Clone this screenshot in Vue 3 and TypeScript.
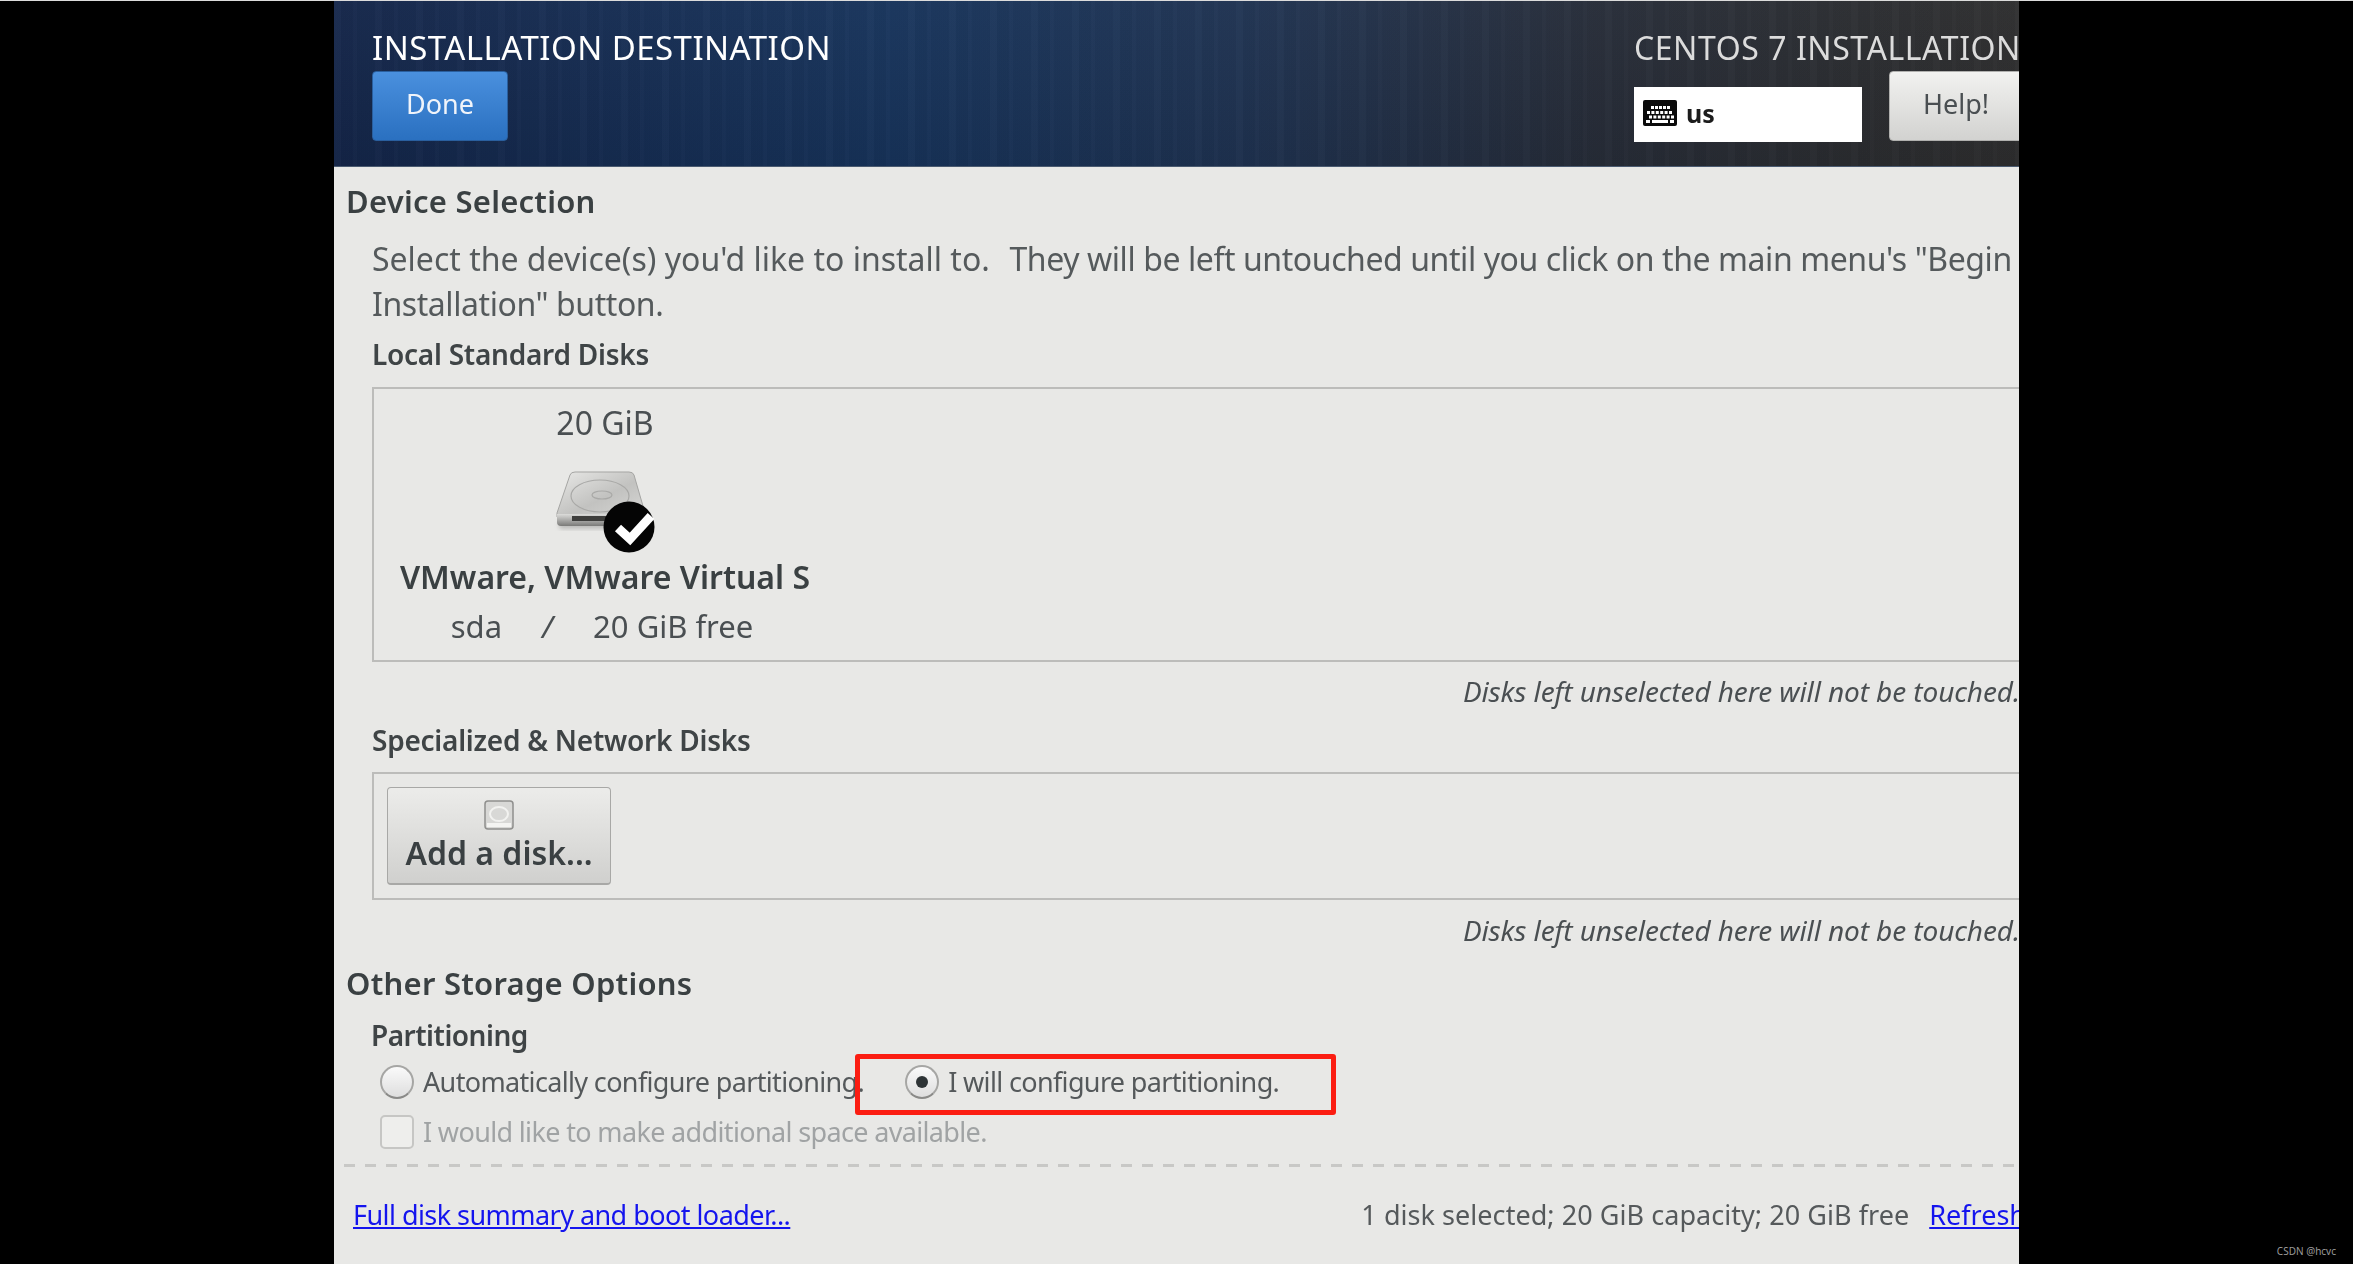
<script setup lang="ts">
const streaks: string = [
  'repeating-linear-gradient(90deg, rgba(255,255,255,.014) 0 7px, rgba(0,0,0,.018) 7px 19px, rgba(255,255,255,.01) 19px 23px, rgba(0,0,0,.012) 23px 41px)',
  'linear-gradient(180deg, rgba(255,255,255,.025), rgba(0,0,0,.07))',
  'linear-gradient(90deg, #14264a 0%, #17345c 33%, #1f3352 54%, #272d39 75%, #2b2d31 90%, #2e2e2f 100%)',
].join(',')
const keyRows: { x: number; y: number; w: number }[] = [
  ...[0, 1, 2, 3, 4].map((i) => ({ x: 8 + i * 4, y: 6, w: 3 })),
  ...[0, 1, 2, 3, 4, 5].map((i) => ({ x: 4 + i * 4.4, y: 11, w: 3 })),
  ...[0, 1, 2, 3, 4, 5].map((i) => ({ x: 6 + i * 4.4, y: 15.5, w: 3 })),
  { x: 3, y: 20, w: 4 },
  { x: 9, y: 20, w: 16 },
  { x: 27, y: 20, w: 4 },
]
</script>

<template>
  <div class="page">
    <div class="window">
      <header class="head" :style="{ backgroundImage: streaks }">
        <div class="head-left">
          <h1 class="title">INSTALLATION DESTINATION</h1>
          <button class="btn btn-done">Done</button>
        </div>
        <div class="head-right">
          <div class="product">CENTOS 7 INSTALLATION</div>
          <div class="head-controls">
            <div class="layout">
              <svg class="kbd" width="34" height="26" viewBox="0 0 34 26">
                <rect x="0" y="0" width="34" height="26" rx="2" fill="#0b0b0b" />
                <rect v-for="(k, i) in keyRows" :key="i" :x="k.x" :y="k.y" :width="k.w" height="3" fill="#fff" />
              </svg>
              <span>us</span>
            </div>
            <button class="btn btn-help">Help!</button>
          </div>
        </div>
      </header>

      <main class="body">
        <h2 class="section first">Device Selection</h2>
        <p class="intro">Select the device(s) you'd like to install to.&nbsp; <span class="tight">They will be left untouched until you click on the main menu's "Begin<br />Installation" button.</span></p>

        <h3 class="sub">Local Standard Disks</h3>
        <div class="box box-local">
          <div class="disk">
            <div class="disk-size">20 GiB</div>
            <svg class="disk-icon" width="100" height="82" viewBox="0 0 100 82">
              <defs>
                <linearGradient id="dtop" x1="0" y1="0" x2="1" y2="1">
                  <stop offset="0" stop-color="#e8e8e6" />
                  <stop offset=".55" stop-color="#c2c2c0" />
                  <stop offset="1" stop-color="#d8d8d6" />
                </linearGradient>
                <linearGradient id="dfront" x1="0" y1="0" x2="0" y2="1">
                  <stop offset="0" stop-color="#dcdcda" />
                  <stop offset="1" stop-color="#7a7a78" />
                </linearGradient>
                <filter id="dshadow" x="-20%" y="-20%" width="140%" height="140%">
                  <feGaussianBlur stdDeviation="2" />
                </filter>
              </defs>
              <rect x="3" y="50" width="84" height="8" rx="3" fill="#9a9a98" opacity=".55" filter="url(#dshadow)" />
              <path d="M19 1 H73 Q77 1 78 4 L89 42 V46 H1 V42 L14 4 Q15 1 19 1Z" fill="url(#dtop)" stroke="#a5a5a3" stroke-width="1" />
              <ellipse cx="44" cy="25" rx="29" ry="16" fill="none" stroke="#a9a9a7" stroke-width="1.2" />
              <ellipse cx="46" cy="24" rx="10" ry="4" fill="none" stroke="#a9a9a7" stroke-width="1.2" />
              <path d="M1 43 H89 V51 Q89 55 85 55 H5 Q1 55 1 51Z" fill="url(#dfront)" />
              <rect x="16" y="45" width="34" height="5" fill="#3e3e3c" />
              <circle cx="73" cy="56" r="25.5" fill="#050505" />
              <path d="M62 57 L74 68 L95 45" fill="none" stroke="#fff" stroke-width="9" />
            </svg>
            <div class="disk-name">VMware, VMware Virtual S</div>
            <div class="disk-meta">
              <span>sda</span><span class="slash">/</span><span>20 GiB free</span>
            </div>
          </div>
        </div>
        <p class="note">Disks left unselected here will not be touched.</p>

        <h3 class="sub sub-net">Specialized &amp; Network Disks</h3>
        <div class="box box-net">
          <button class="add">
            <svg class="add-icon" width="30" height="30" viewBox="0 0 30 30">
              <rect x="1" y="1" width="28" height="28" rx="3" fill="#d8d8d6" stroke="#8f8f8d" stroke-width="1.5" />
              <ellipse cx="15" cy="14" rx="9" ry="7" fill="none" stroke="#f2f2f0" stroke-width="2" />
              <rect x="3" y="23" width="24" height="4" fill="#f4f4f2" />
            </svg>
            <span>Add a disk...</span>
          </button>
        </div>
        <p class="note note-net">Disks left unselected here will not be touched.</p>

        <h2 class="section other">Other Storage Options</h2>
        <h3 class="sub sub-part">Partitioning</h3>
        <div class="radios">
          <label class="opt opt-auto"><span class="radio"></span>Automatically configure partitioning.</label>
          <label class="opt opt-manual"><span class="radio radio-on"></span>I will configure partitioning.</label>
          <div class="highlight"></div>
        </div>
        <label class="opt opt-check"><span class="check"></span>I would like to make additional space available.</label>
        <div class="dash"></div>
        <footer class="foot">
          <a class="link link-full">Full disk summary and boot loader...</a>
          <span class="summary">1 disk selected; 20 GiB capacity; 20 GiB free</span>
          <a class="link refresh">Refresh</a>
        </footer>
      </main>
    </div>
    <div class="topline"></div>
    <div class="mark">CSDN @hcvc</div>
  </div>
</template>

<style>
html, body { margin: 0; background: #000; }
</style>

<style scoped>
.page {
  position: relative;
  width: 2353px;
  height: 1264px;
  background: #000;
  overflow: hidden;
  font-family: "Noto Sans", "Open Sans", sans-serif;
}
.topline {
  position: absolute;
  left: 0;
  top: 0;
  width: 100%;
  height: 1px;
  background: #dcdcdc;
}
.window {
  width: 1685px;
  height: 1264px;
  margin-left: 334px;
  background: #e8e8e6;
  overflow: hidden;
  color: #2e3436;
  filter: blur(0.5px);
}
.head {
  height: 167px;
  box-sizing: border-box;
  display: flex;
  justify-content: space-between;
  padding: 28px 0 0 38px;
  border-bottom: 1px solid #4a5a70;
  white-space: nowrap;
}
.title, .product {
  margin: 0;
  line-height: 40px;
  font-weight: 400;
  height: 43px;
}
.title { color: #fff; font-size: 33px; letter-spacing: 0.45px; }
.product { color: #dcdcdc; font-size: 32px; letter-spacing: 0.55px; }
.btn {
  display: block;
  box-sizing: border-box;
  height: 70px;
  font-family: inherit;
  font-size: 27px;
  border-radius: 4px;
  padding: 0 0 6px;
}
.btn-done {
  width: 136px;
  color: #f0f4fa;
  background: linear-gradient(#4a90de, #2a70c0);
  border: 1px solid #2a5f9e;
}
.head-right { width: 385px; flex: none; }
.head-controls { display: flex; align-items: flex-end; gap: 27px; }
.layout {
  flex: none;
  width: 228px;
  height: 55px;
  box-sizing: border-box;
  background: #fff;
  color: #1c1c1c;
  display: flex;
  align-items: center;
  gap: 9px;
  padding: 0 0 3px 9px;
  font-size: 25px;
  font-weight: 700;
  margin-bottom: -1px;
}
.kbd { flex: none; }
.btn-help {
  width: 160px;
  flex: none;
  padding-right: 26px;
  color: #4a4f52;
  background: linear-gradient(#f2f2f0, #d2d2d0);
  border: 1px solid #b0b0ae;
}
.body { padding: 0 0 0 12px; white-space: nowrap; }
.section {
  margin: 0;
  font-size: 31px;
  line-height: 40px;
  font-weight: 600;
  letter-spacing: 0.25px;
  color: #3a4042;
}
.first { margin-top: 14px; }
.intro {
  margin: 16px 0 0 26px;
  font-size: 32px;
  line-height: 44.5px;
  color: #555a5c;
}
.tight { letter-spacing: -0.42px; margin-left: 3px; }
.sub {
  margin: 10px 0 0 26px;
  font-size: 28px;
  line-height: 36px;
  font-weight: 600;
  letter-spacing: -0.25px;
  color: #3f4446;
}
.box {
  margin: 15px 0 0 26px;
  width: 1700px;
  box-sizing: border-box;
  border: 2px solid #bcbcba;
}
.box-local { height: 275px; padding: 0 0 0 25px; }
.disk { width: 412px; text-align: center; }
.disk-size { font-size: 32px; line-height: 40px; margin-top: 14px; color: #4a4f52; }
.disk-icon { display: block; margin: 28px 0 0 157px; overflow: visible; }
.disk-name { font-size: 32px; line-height: 40px; font-weight: 600; color: #3a4042; margin-top: 4px; }
.disk-meta {
  display: flex;
  justify-content: center;
  gap: 40px;
  padding-right: 6px;
  font-size: 31px;
  line-height: 40px;
  margin-top: 9px;
  color: #4a4f52;
}
.slash { font-style: italic; }
.note {
  margin: 9px 0 0;
  width: 1674px;
  text-align: right;
  font-style: italic;
  font-size: 28px;
  line-height: 40px;
  letter-spacing: -0.1px;
  color: #4a4f52;
}
.sub-net { margin-top: 11px; }
.box-net { margin-top: 14px; height: 128px; padding: 13px 0 0 13px; }
.add {
  display: flex;
  flex-direction: column;
  align-items: center;
  box-sizing: border-box;
  width: 224px;
  height: 98px;
  padding: 12px 0 0;
  font-family: inherit;
  font-size: 32px;
  line-height: 40px;
  font-weight: 600;
  color: #3a4042;
  border: 1px solid #a8a8a6;
  border-bottom-width: 2px;
  border-radius: 4px;
  background: linear-gradient(#ececea, #d0d0ce);
}
.add-icon { display: block; margin-bottom: 3px; }
.note-net { margin-top: 10px; }
.other { margin-top: 13px; }
.sub-part { margin-top: 14px; margin-left: 25px; letter-spacing: -0.5px; }
.radios {
  position: relative;
  display: flex;
  margin: 9px 0 0 34px;
  height: 40px;
}
.opt {
  display: flex;
  align-items: center;
  gap: 9px;
  font-size: 27px;
  line-height: 40px;
  letter-spacing: -0.65px;
  color: #55595b;
}
.opt-manual { position: relative; margin-left: 41px; }
.radio, .check {
  display: block;
  flex: none;
  width: 34px;
  height: 34px;
  box-sizing: border-box;
  border: 2px solid #a6a6a4;
  border-bottom-color: #8a8a88;
  background: linear-gradient(#fafafa, #dedede);
}
.radio { border-radius: 50%; position: relative; }
.radio-on::after {
  content: "";
  position: absolute;
  left: 9px;
  top: 9px;
  width: 12px;
  height: 12px;
  border-radius: 50%;
  background: #2e3436;
}
.highlight {
  position: absolute;
  left: 475px;
  top: -8px;
  width: 481px;
  height: 61px;
  box-sizing: border-box;
  border: 5px solid #fb1d12;
  border-radius: 3px;
}
.opt-check { margin: 10px 0 0 34px; color: #a0a3a4; }
.check {
  border-radius: 5px;
  border-color: #c6c6c4;
  background: #eeeeec;
}
.dash {
  margin: 12px 0 0 -2px;
  height: 3px;
  width: 1700px;
  background: repeating-linear-gradient(90deg, #c8c8c6 0 11px, transparent 11px 21px);
}
.foot {
  display: flex;
  margin: 28px 0 0 7px;
  font-size: 27px;
  line-height: 40px;
  color: #55595b;
}
.link { color: #1414ee; text-decoration: underline; }
.link-full { letter-spacing: -0.55px; }
.summary { margin-left: 571px; letter-spacing: 0.05px; }
.refresh { margin-left: 20px; }
.mark {
  position: absolute;
  right: 17px;
  bottom: 6px;
  font-size: 10px;
  line-height: 14px;
  color: #9a9a9a;
}
</style>
